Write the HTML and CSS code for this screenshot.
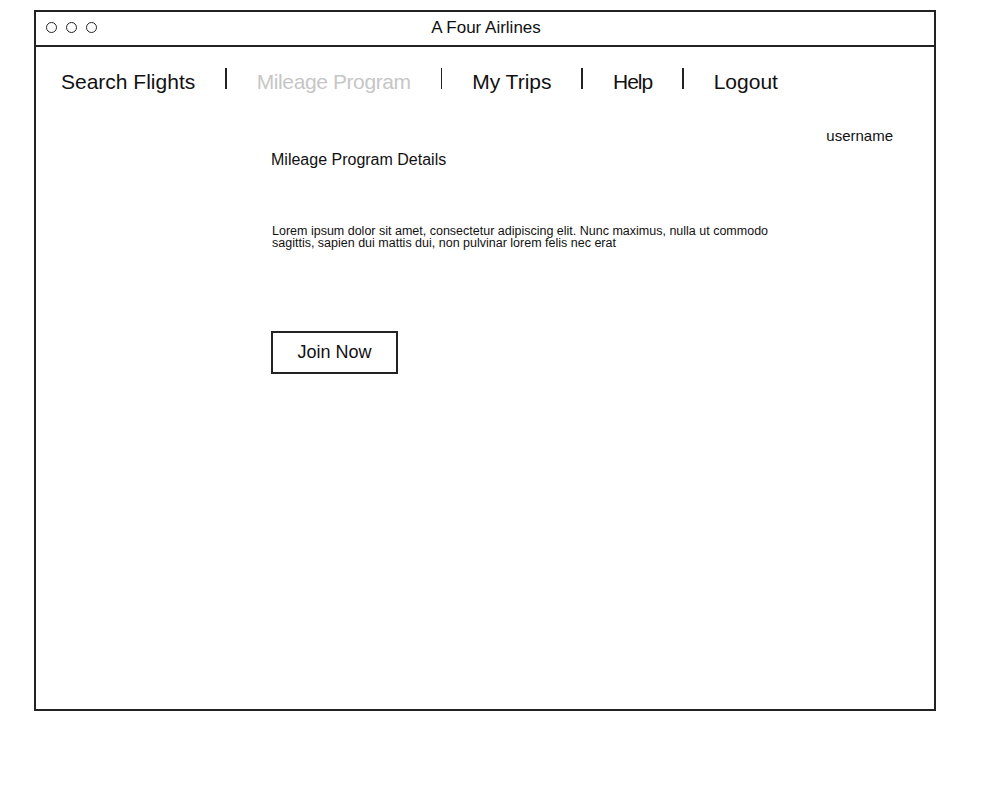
FILE: index.html
```html
<!DOCTYPE html>
<html>
<head>
<meta charset="utf-8">
<title>A Four Airlines</title>
<link rel="stylesheet" href="styles.css">
</head>
<body>
<div class="window">
  <div class="titlebar">
    <div class="dots"><span class="dot"></span><span class="dot"></span><span class="dot"></span></div>
    <div class="title">A Four Airlines</div>
  </div>
  <nav class="nav">
    <span class="nav-item">Search Flights</span>
    <span class="sep"></span>
    <span class="nav-item disabled">Mileage Program</span>
    <span class="sep"></span>
    <span class="nav-item">My Trips</span>
    <span class="sep"></span>
    <span class="nav-item short">Help</span>
    <span class="sep"></span>
    <span class="nav-item">Logout</span>
  </nav>
  <div class="userrow"><span class="username">username</span></div>
  <main class="content">
    <h1 class="heading">Mileage Program Details</h1>
    <p class="lorem">Lorem ipsum dolor sit amet, consectetur adipiscing elit. Nunc maximus, nulla ut commodo sagittis, sapien dui mattis dui, non pulvinar lorem felis nec erat</p>
    <button class="btn">Join Now</button>
  </main>
</div>
</body>
</html>
```
FILE: styles.css
```css
* { box-sizing: border-box; }
html, body { margin: 0; padding: 0; background: #fff; }
body {
  font-family: "Liberation Sans", Arial, sans-serif;
  color: #111;
}
.window {
  margin: 10px 0 0 34px;
  width: 902px;
  height: 701px;
  border: 2px solid #222;
  display: flex;
  flex-direction: column;
}
.titlebar {
  height: 35px;
  border-bottom: 2px solid #222;
  position: relative;
  display: flex;
  align-items: center;
  justify-content: center;
}
.dots {
  position: absolute;
  left: 10px;
  top: 10px;
  display: flex;
  gap: 9px;
}
.dot {
  width: 11px;
  height: 11px;
  border: 1.5px solid #222;
  border-radius: 50%;
}
.title {
  font-size: 17px;
  line-height: 20px;
  margin: -2px 0 0 2px;
}
.nav {
  display: flex;
  align-items: center;
  padding: 13px 0 0 25px;
  gap: 30px;
  height: 56px;
}
.nav-item {
  font-size: 21px;
  line-height: 24px;
  white-space: nowrap;
}
.nav-item.disabled { color: #c6c6c6; letter-spacing: -0.4px; }
.nav-item.short { letter-spacing: -1px; }
.sep {
  width: 1.5px;
  height: 21px;
  background: #222;
  margin-top: -7px;
}
.userrow {
  display: flex;
  justify-content: flex-end;
  padding: 24px 41px 0 0;
}
.username { font-size: 15px; line-height: 18px; }
.content {
  padding-left: 235px;
  display: flex;
  flex-direction: column;
  align-items: flex-start;
}
.heading {
  margin: 5px 0 0 0;
  font-size: 16px;
  font-weight: normal;
  line-height: 20px;
}
.lorem {
  margin: 55px 0 0 1px;
  width: 506px;
  font-size: 12.5px;
  line-height: 12px;
}
.btn {
  margin-top: 82px;
  width: 127px;
  height: 43px;
  border: 2px solid #222;
  background: #fff;
  font-family: inherit;
  font-size: 18px;
  color: #111;
  padding: 0;
}
```
